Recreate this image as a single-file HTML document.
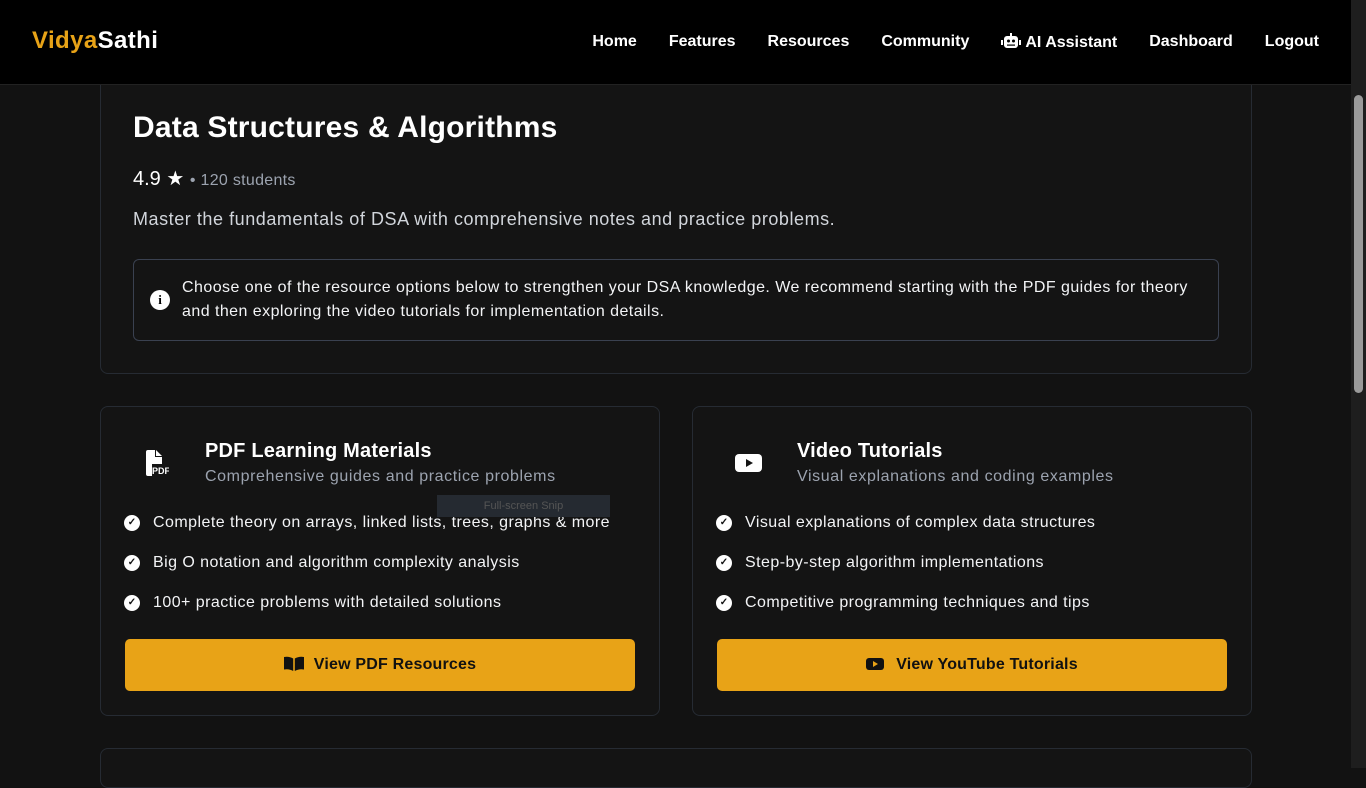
<!DOCTYPE html>
<html><head><meta charset="utf-8"><style>
*{box-sizing:border-box;margin:0;padding:0}
body{width:1366px;height:768px;overflow:hidden;background:#121212;font-family:"Liberation Sans",sans-serif;color:#fff;position:relative}
.nav{position:absolute;left:0;top:0;width:1351px;height:85px;background:#000;border-bottom:1px solid #222}
.logo{position:absolute;left:32px;top:27px;font-size:24px;font-weight:bold;letter-spacing:0.4px}
.logo span{color:#e8a317}
.links{position:absolute;right:32px;top:33px;display:flex;gap:32px;font-size:16px;font-weight:bold}
.sb{position:absolute;right:0;top:0;width:15px;height:768px;background:#1e1e1e}
.sb div{position:absolute;left:3px;top:95px;width:9px;height:298px;background:#9a9a9a;border-radius:5px}
.card{position:absolute;background:#141414;border:1px solid #262b33;border-radius:8px}
h1{position:absolute;left:133px;top:111px;font-size:30px;font-weight:bold;letter-spacing:0.2px}
.rate{position:absolute;left:133px;top:166px;font-size:20px}
.rate small{font-size:16px;color:#9ca3af;letter-spacing:0.3px}
.desc{position:absolute;left:133px;top:209px;font-size:18px;color:#d1d5db;letter-spacing:0.55px}
.info{position:absolute;left:133px;top:259px;width:1086px;height:82px;border:1px solid #3a4150;border-radius:6px;font-size:16px;line-height:24px;padding:16px 18px 0 48px;color:#f3f4f6;letter-spacing:0.45px}
.info i{position:absolute;left:16px;top:30px;width:20px;height:20px;border-radius:50%;background:#fff;color:#000;font-style:normal;font-weight:bold;font-size:13px;text-align:center;line-height:20px;font-family:"Liberation Serif",serif;letter-spacing:0}
.ct{position:absolute;font-size:20px;font-weight:bold;letter-spacing:0.2px}
.cs{position:absolute;font-size:16px;color:#9ca3af;letter-spacing:0.6px}
.li{position:absolute;font-size:16px;color:#f3f4f6;letter-spacing:0.45px}
.li:before{content:"✓";position:absolute;left:-29px;top:1px;width:16px;height:16px;border-radius:50%;background:#fff;color:#111;font-size:10px;text-align:center;line-height:16px;font-weight:bold;letter-spacing:0}
.btn{position:absolute;width:510px;height:52px;background:#e8a317;border-radius:5px;color:#111;font-weight:bold;font-size:16px;text-align:center;line-height:52px;letter-spacing:0.2px}
</style></head><body>
<div class="card" style="left:100px;top:70px;width:1152px;height:304px;border-top:none;border-radius:0 0 8px 8px"></div>
<div class="nav"><div class="logo"><span>Vidya</span>Sathi</div>
<div class="links"><span>Home</span><span>Features</span><span>Resources</span><span>Community</span><span><svg width="20" height="16" viewBox="0 0 20 16" style="vertical-align:-2px;margin-right:4px"><rect x="3" y="3" width="14" height="12" rx="3" fill="#fff"/><rect x="0" y="7" width="2" height="5" fill="#fff"/><rect x="18" y="7" width="2" height="5" fill="#fff"/><rect x="9" y="0" width="2" height="3" fill="#fff"/><circle cx="7.5" cy="8" r="1.5" fill="#000"/><circle cx="12.5" cy="8" r="1.5" fill="#000"/><rect x="6" y="11.5" width="8" height="1.2" fill="#000"/></svg>AI Assistant</span><span>Dashboard</span><span>Logout</span></div></div>
<h1>Data Structures &amp; Algorithms</h1>
<div class="rate">4.9 ★ <small>• 120 students</small></div>
<div class="desc">Master the fundamentals of DSA with comprehensive notes and practice problems.</div>
<div class="info"><i>i</i>Choose one of the resource options below to strengthen your DSA knowledge. We recommend starting with the PDF guides for theory and then exploring the video tutorials for implementation details.</div>

<div class="card" style="left:100px;top:406px;width:560px;height:310px"></div>
<div class="card" style="left:692px;top:406px;width:560px;height:310px"></div>
<div class="card" style="left:100px;top:748px;width:1152px;height:40px"></div>

<svg style="position:absolute;left:145px;top:450px" width="24" height="26" viewBox="0 0 24 26"><path d="M1 2a2 2 0 0 1 2-2h7v7h7v7H7v12H3a2 2 0 0 1-2-2z M11 0l6 6h-6z" fill="#fff"/><text x="7" y="24" font-size="9" font-weight="bold" fill="#fff" font-family="Liberation Sans">PDF</text></svg>
<div class="ct" style="left:205px;top:440px">PDF Learning Materials</div>
<div class="cs" style="left:205px;top:468px">Comprehensive guides and practice problems</div>
<div class="li" style="left:153px;top:514px">Complete theory on arrays, linked lists, trees, graphs &amp; more</div>
<div class="li" style="left:153px;top:554px">Big O notation and algorithm complexity analysis</div>
<div class="li" style="left:153px;top:594px">100+ practice problems with detailed solutions</div>
<div class="btn" style="left:125px;top:639px"><svg width="20" height="15" viewBox="0 0 20 15" style="vertical-align:-2px;margin-right:10px"><path d="M0 1q5-1 9.2 1.5V15Q5 12.5 0 13.5z M20 1q-5-1-9.2 1.5V15q4.2-2.5 9.2-1.5z" fill="#111"/></svg>View PDF Resources</div>

<svg style="position:absolute;left:735px;top:454px" width="27" height="18"><rect width="27" height="18" rx="4" fill="#fff"/><path d="M11 5l7 4-7 4z" fill="#141414"/></svg>
<div class="ct" style="left:797px;top:440px">Video Tutorials</div>
<div class="cs" style="left:797px;top:468px">Visual explanations and coding examples</div>
<div class="li" style="left:745px;top:514px">Visual explanations of complex data structures</div>
<div class="li" style="left:745px;top:554px">Step-by-step algorithm implementations</div>
<div class="li" style="left:745px;top:594px">Competitive programming techniques and tips</div>
<div class="btn" style="left:717px;top:639px"><svg width="18" height="12" style="vertical-align:-1px;margin-right:12px"><rect width="18" height="12" rx="3" fill="#111"/><path d="M7 3l5 3-5 3z" fill="#e8a317"/></svg>View YouTube Tutorials</div>

<div style="position:absolute;left:437px;top:495px;width:173px;height:22px;background:#252a31;color:#555;font-size:11px;text-align:center;line-height:22px">Full-screen Snip</div>
<div class="sb"><div></div></div>
</body></html>
